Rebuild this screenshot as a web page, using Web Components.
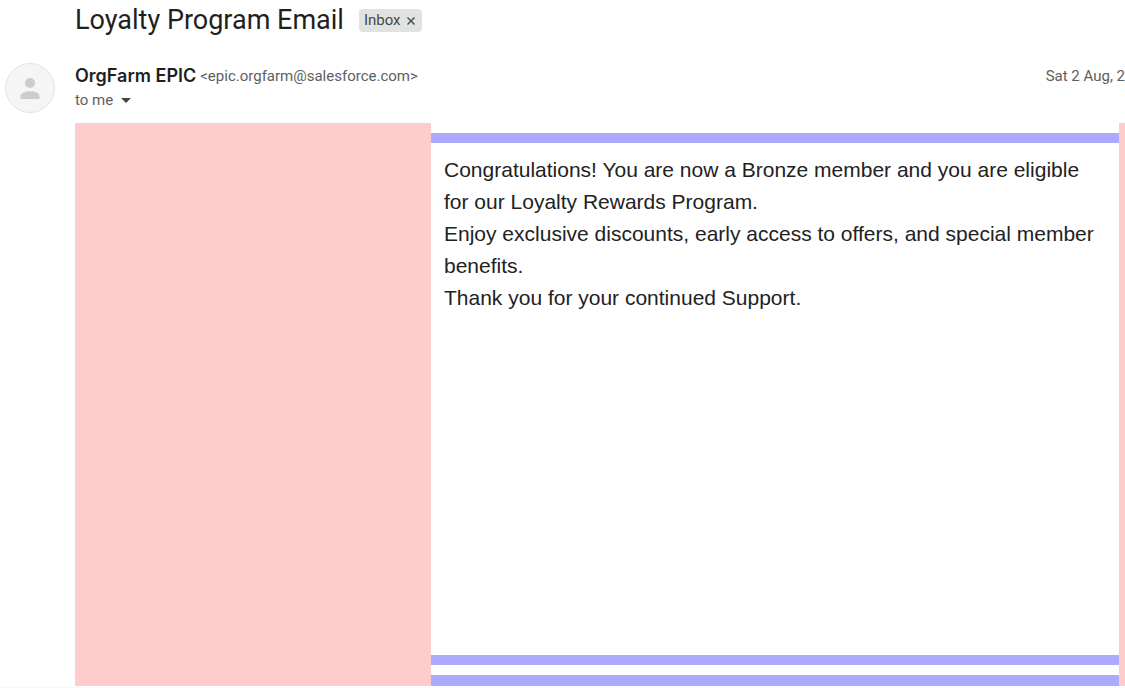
<!DOCTYPE html>
<html lang="en">
<head>
<meta charset="utf-8">
<meta name="viewport" content="width=device-width, initial-scale=1">
<title>Loyalty Program Email</title>
<style>
html,body{margin:0;background:#fff}
body{font-family:Roboto,"Liberation Sans",sans-serif;color:#1f1f1f}
</style>
</head>
<body>
<mail-view>
  <mail-subject slot="subject">Loyalty Program Email<mail-label slot="label">Inbox</mail-label></mail-subject>
  <mail-sender slot="sender" address="epic.orgfarm@salesforce.com" date="Sat 2 Aug, 2">OrgFarm EPIC</mail-sender>
  <mail-body slot="body">
    <p>Congratulations! You are now a Bronze member and you are eligible for our Loyalty Rewards Program.</p>
    <p>Enjoy exclusive discounts, early access to offers, and special member benefits.</p>
    <p>Thank you for your continued Support.</p>
  </mail-body>
</mail-view>
<script>
class Base extends HTMLElement {
  constructor() {
    super();
    this.attachShadow({ mode: 'open' }).innerHTML = this.constructor.markup;
  }
}

customElements.define('mail-view', class extends Base {
  static markup = `
    <style>
      :host{display:flex;flex-direction:column;box-sizing:border-box;min-height:100vh;overflow:hidden;border-bottom:1px solid #f8f8f8;padding-bottom:1px}
      main{display:flex;flex-direction:column;flex:1}
      .body{display:flex;flex:1;padding-left:75px}
    </style>
    <main>
      <slot name="subject"></slot>
      <slot name="sender"></slot>
      <div class="body"><slot name="body"></slot></div>
    </main>`;
});

customElements.define('mail-subject', class extends Base {
  static markup = `
    <style>
      :host{display:flex;align-items:center;gap:15px;height:41px;padding-left:75px}
      h1{margin:0;font-weight:400;font-size:27px;line-height:43px;white-space:nowrap}
    </style>
    <h1><slot></slot></h1><slot name="label"></slot>`;
});

customElements.define('mail-label', class extends Base {
  static markup = `
    <style>
      :host{display:flex;align-items:center;height:23px;border-radius:4px;background:#e1e3e1;color:#444746;font-size:15px}
      a{color:inherit;text-decoration:none;padding-left:5px;line-height:23px}
      button{display:flex;align-items:center;justify-content:center;width:21px;height:23px;border:0;padding:0;background:none;color:inherit}
      svg{display:block}
    </style>
    <a href="#inbox"><slot></slot></a>
    <button type="button" aria-label="Remove label Inbox">
      <svg width="10" height="10" viewBox="0 0 10 10" fill="none" stroke="currentColor" stroke-width="1.4"><path d="M1.500 1.500l7 7M8.500 1.500l-7 7"/></svg>
    </button>`;
});

customElements.define('mail-sender', class extends Base {
  static markup = `
    <style>
      :host{display:flex;align-items:center;height:82px;box-sizing:border-box;padding:20px 0 8px 5px;color:#5e5e5e;font-size:15px}
      svg{display:block}
      .avatar{flex:none;width:50px;margin-right:20px}
      .info{flex:1;min-width:0}
      .line{display:flex;align-items:center;height:25px;white-space:nowrap}
      h2{margin:0 4px 0 0;font:600 18px/25px Inter,Roboto,sans-serif;color:#1f1f1f}
      time{margin-left:auto}
      button{display:flex;align-items:center;gap:8px;border:0;padding:0;background:none;color:inherit;font:inherit;line-height:25px}
    </style>
    <svg class="avatar" width="50" height="50" viewBox="0 0 50 50" role="img" aria-label="Profile">
      <circle cx="25" cy="25" r="24.500" fill="#f5f5f5" stroke="#e3e3e3"/>
      <circle cx="25" cy="20" r="5" fill="#ccc"/>
      <path d="M15.500 36v-3c0-3 5-4.700 9.500-4.700s9.500 1.700 9.500 4.700v3z" fill="#ccc"/>
    </svg>
    <div class="info">
      <div class="line"><h2><slot></slot></h2><span class="address"></span><time></time></div>
      <button type="button">to me
        <svg width="10" height="5" viewBox="0 0 10 5"><path d="M0 0h10L5 5z" fill="#444"/></svg>
      </button>
    </div>`;
  connectedCallback() {
    this.shadowRoot.querySelector('.address').textContent = '<' + this.getAttribute('address') + '>';
    this.shadowRoot.querySelector('time').textContent = this.getAttribute('date');
  }
});

customElements.define('mail-body', class extends Base {
  static markup = `
    <style>
      :host{flex:1;display:grid;grid-template-columns:minmax(0,356fr) minmax(0,688fr) 6px;background:#fcc}
      .card{grid-column:2;display:flex;flex-direction:column;background:#fff;padding-top:10px}
      .text{flex:1;border:solid #aaf;border-width:10px 0;padding:11px 13px;font:21px/32px "Liberation Sans",Arial,sans-serif;color:#222}
      .footer{height:11px;margin-top:10px;background:#aaf}
      ::slotted(p){margin:0}
    </style>
    <div class="card">
      <div class="text"><slot></slot></div>
      <div class="footer"></div>
    </div>`;
});
</script>
</body>
</html>
